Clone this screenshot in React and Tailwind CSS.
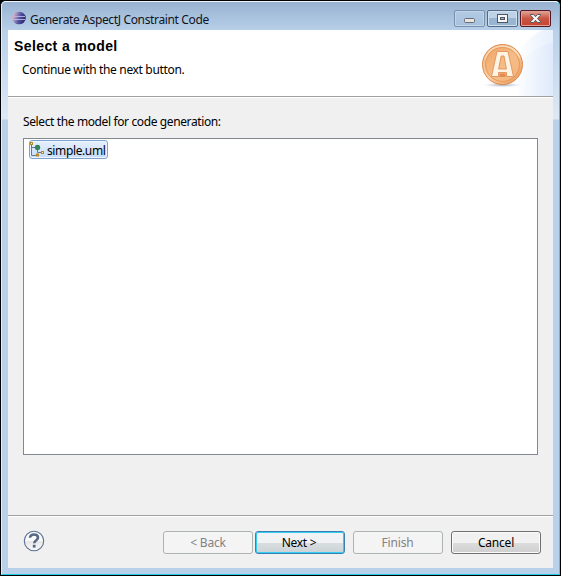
import React from "react";

function EclipseIcon() {
  return (
    <svg width="14" height="14" viewBox="0 0 14 14" className="shrink-0">
      <defs>
        <linearGradient id="orb" x1="0" x2="1" y1="0.3" y2="0.6">
          <stop offset="0" stopColor="#f3b7c4" />
          <stop offset="0.28" stopColor="#9b8bc0" />
          <stop offset="0.55" stopColor="#5553a0" />
          <stop offset="1" stopColor="#252566" />
        </linearGradient>
      </defs>
      <ellipse cx="7" cy="7" rx="6.8" ry="6.3" fill="url(#orb)" />
      <path d="M1 5.5H13M1 8.5H13" stroke="#b9b8e2" strokeWidth=".9" />
    </svg>
  );
}

function CoinLogo() {
  return (
    <svg width="75" height="66" viewBox="478 30 75 66" className="block">
      <defs>
        <linearGradient id="sky" x1="0" x2="1" y1="0" y2="0">
          <stop offset="0" stopColor="#ffffff" />
          <stop offset="1" stopColor="#e6effc" />
        </linearGradient>
        <linearGradient id="band" x1="0" x2="1" y1="0" y2="0">
          <stop offset="0" stopColor="#fbfdff" />
          <stop offset="1" stopColor="#dbe7fa" />
        </linearGradient>
        <linearGradient id="coin" x1="0" x2="1" y1="0" y2="1">
          <stop offset="0" stopColor="#f0a768" />
          <stop offset=".55" stopColor="#f6bd88" />
          <stop offset="1" stopColor="#f4b276" />
        </linearGradient>
        <linearGradient id="rim" x1="0" x2="1" y1="0" y2="1">
          <stop offset="0" stopColor="#f3b27a" />
          <stop offset=".5" stopColor="#fbd0a6" />
          <stop offset="1" stopColor="#e58f4b" />
        </linearGradient>
        <radialGradient id="shade">
          <stop offset="0" stopColor="#9fa4b4" />
          <stop offset="1" stopColor="#d8dce8" stopOpacity="0" />
        </radialGradient>
      </defs>
      <path d="M518 96V52Q526 40 541 30H553V96Z" fill="url(#sky)" />
      <path d="M518 66Q532 48 553 42V96H518Z" fill="url(#band)" opacity=".7" />
      <ellipse cx="502.5" cy="85" rx="20" ry="2.4" fill="url(#shade)" />
      <circle cx="502.5" cy="64.5" r="20" fill="url(#rim)" stroke="#de8a4d" strokeWidth="1" />
      <circle cx="502.5" cy="64.5" r="17" fill="url(#coin)" stroke="#e39556" strokeWidth=".9" />
      <path
        fillRule="evenodd"
        d="M497 51.5H508L513.5 76.5H506.5V72.5H498.5V76.5H491.5ZM501.2 56L498.6 69H506.4L504 56Z"
        fill="#fff3e4"
        stroke="#e0905a"
        strokeWidth=".9"
      />
      <path d="M499.5 73.5H505.5V77H499.5Z" fill="#e08c50" />
      <path d="M485 59Q489 47 502 46Q514 46 520 58" fill="none" stroke="#fff0dc" strokeWidth="1.2" opacity=".55" />
    </svg>
  );
}

function ModelIcon() {
  return (
    <svg width="15" height="15" viewBox="0 0 15 15" className="shrink-0">
      <path d="M1.5 3V13.5H6M2 5.5H7.5V10.5H11" fill="none" stroke="#6f7587" />
      <rect x=".5" y=".5" width="2" height="2" fill="#fff2a8" stroke="#b68b24" />
      <circle cx="7.5" cy="5.5" r="2.7" fill="#36845a" />
      <rect x="11.5" y="9.5" width="2" height="2" fill="#fff2a8" stroke="#b68b24" />
      <rect x="6.5" y="12" width="2" height="2" fill="#fff2a8" stroke="#b68b24" />
    </svg>
  );
}

function WindowButtons() {
  return (
    <div className="flex gap-[2px]">
      <div className="flex h-[17px] w-[31px] items-center justify-center rounded-[2px] border border-[#7991ac] bg-linear-to-b from-[#b3cae3] to-[#a7c1dd] shadow-[inset_0_0_0_1px_#c1d5ea]">
        <svg width="13" height="13">
          <rect x="1.5" y="6.5" width="10" height="4" rx="1" fill="#e8e6e2" stroke="#686b73" />
        </svg>
      </div>
      <div className="flex h-[17px] w-[31px] items-center justify-center rounded-[2px] border border-[#546b85] bg-linear-to-b from-[#bdd2e7] from-50% to-[#98b5d1] to-50% shadow-[inset_0_0_0_1px_#d0e0ef]">
        <svg width="13" height="13" shapeRendering="crispEdges">
          <path fillRule="evenodd" d="M1.5 2.5H11.5V10.5H1.5ZM4.5 5.5H8.5V7.5H4.5Z" fill="#f6f6f6" stroke="#505564" />
        </svg>
      </div>
      <div className="flex h-[17px] w-[31px] items-center justify-center rounded-[2px] border border-[#501923] bg-linear-to-b from-[#dfa397] via-[#c95543] via-50% to-[#c7442e] shadow-[inset_0_0_0_1px_#e1a094]">
        <svg width="13" height="13" viewBox="0 0 13 13">
          <path d="M1.5 2.5H4.5L6.5 4.7L8.5 2.5H11.5V3.2L8.5 6.5L11.5 9.8V10.5H8.5L6.5 8.3L4.5 10.5H1.5V9.8L4.5 6.5L1.5 3.2Z" fill="#f7f7f7" stroke="#59545f" />
        </svg>
      </div>
    </div>
  );
}

function HelpIcon() {
  return (
    <svg width="22" height="22" viewBox="0 0 22 22" className="shrink-0">
      <defs>
        <linearGradient id="help" x1="0" x2="0" y1="0" y2="1">
          <stop offset=".5" stopColor="#fafafa" />
          <stop offset=".5" stopColor="#e5e5e8" />
          <stop offset="1" stopColor="#fafafa" />
        </linearGradient>
      </defs>
      <circle cx="11" cy="11" r="9.7" fill="url(#help)" stroke="#5c6f91" strokeWidth="1.1" />
      <path d="M7 7.8C7 3.4 15 3.5 15 7.8C15 10.3 11.2 10.2 11.2 13.3" fill="none" stroke="#576987" strokeWidth="2.6" />
      <rect x="9.8" y="14.8" width="2.8" height="2.8" fill="#576987" />
    </svg>
  );
}

const label = "whitespace-nowrap font-['Noto_Sans','Open_Sans',sans-serif] text-[12px] leading-4";

export default function App() {
  return (
    <div className="h-[576px] w-[561px] overflow-hidden bg-black">
      <div className="flex h-[576px] w-[561px] flex-col rounded-t-[6px] border border-black bg-[#b9d1ea]">
        <div className="flex min-h-0 flex-1 flex-col rounded-t-[5px] border border-t-[#eef5fb] border-r-[#35cfe5] border-b-[#20cce2] border-l-[#e3eefa] bg-[linear-gradient(180deg,#98b2d0_0px,#b9d1ea_30px,#dce8f5_115px,#dce8f5_117px,#b9d0ea_118px)] px-[6px] pb-[6px]">
          <header className="flex h-[28px] shrink-0 justify-between pt-[8px] pr-[2px] pl-[4px]">
            <div className="flex h-[16px] items-center gap-[4px]">
              <EclipseIcon />
              <span className={`${label} pt-[3px] tracking-[-0.35px] text-[#10131c]`}>Generate AspectJ Constraint Code</span>
            </div>
            <WindowButtons />
          </header>
          <main className="flex min-h-0 flex-1 flex-col bg-[#f0f0f0]">
            <section className="flex h-[67px] shrink-0 justify-between border-b border-[#a0a0a0] bg-white">
              <div className="pt-[8px] pl-[6px]">
                <h1 className="font-['Liberation_Sans',Arial,sans-serif] text-[14px] leading-4 font-bold tracking-[0.4px] whitespace-nowrap text-black">Select a model</h1>
                <p className={`${label} mt-[8px] ml-[8px] tracking-[-0.34px] text-black`}>Continue with the next button.</p>
              </div>
              <CoinLogo />
            </section>
            <section className="flex min-h-0 flex-1 flex-col border-t border-white px-[15px] pt-[16px]">
              <p className={`${label} tracking-[-0.38px] text-black`}>Select the model for code generation:</p>
              <div className="mt-[8px] h-[317px] shrink-0 border border-[#828790] bg-white pt-[1px] pl-[5px]">
                <div className="flex h-[19px] w-[79px] items-center gap-[2px] rounded-[3px] border border-[#7da2ce] bg-linear-to-b from-[#e6f0fc] to-[#c5dcfa] shadow-[inset_0_0_0_1px_#edf5ff]">
                  <ModelIcon />
                  <span className={`${label} pt-[2px] tracking-[-0.38px] text-black`}>simple.uml</span>
                </div>
              </div>
            </section>
            <footer className="flex h-[53px] shrink-0 items-start justify-between border-t border-[#a0a0a0] pt-[15px] pr-[12px] pl-[15px] shadow-[inset_0_1px_0_#fff]">
              <div className="-mt-px">
                <HelpIcon />
              </div>
              <div className="flex">
                <button disabled className={`${label} h-[23px] w-[90px] rounded-[3px] border border-[#adb2b5] bg-[#f4f4f4] pt-px tracking-[-0.2px] text-[#838383]`}>&lt; Back</button>
                <button className={`${label} ml-[2px] h-[23px] w-[90px] rounded-[3px] border border-[#3c7fb1] bg-linear-to-b from-[#f0f2f3] from-50% via-[#d9dfe1] via-50% to-[#cbd2d5] pt-px pr-[2px] tracking-[-0.3px] text-black shadow-[inset_0_0_0_1px_#35cdf3]`}>Next &gt;</button>
                <button disabled className={`${label} ml-[8px] h-[23px] w-[90px] rounded-[3px] border border-[#adb2b5] bg-[#f4f4f4] pt-px pr-px tracking-[-0.2px] text-[#838383]`}>Finish</button>
                <button className={`${label} ml-[8px] h-[23px] w-[90px] rounded-[3px] border border-[#707070] bg-linear-to-b from-[#f1f1f1] from-50% via-[#dddddd] via-50% to-[#cfcfcf] pt-px tracking-[-0.2px] text-black shadow-[inset_0_0_0_1px_#fafafa]`}>Cancel</button>
              </div>
            </footer>
          </main>
        </div>
      </div>
    </div>
  );
}
